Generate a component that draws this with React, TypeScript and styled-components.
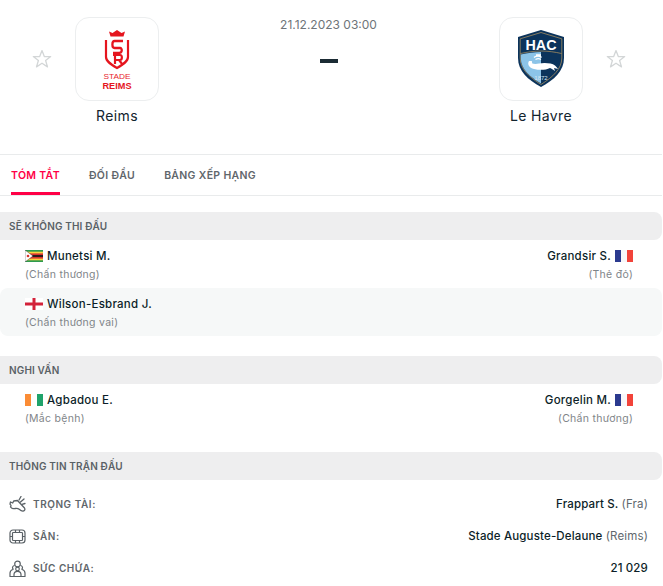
import React from "react";
import styled, { createGlobalStyle } from "styled-components";

const Global = createGlobalStyle`
  html, body { margin: 0; padding: 0; background: #fff; overflow: hidden; }
  body { font-family: Inter, "Noto Sans", sans-serif; color: #001e28; }
`;

const Page = styled.div`
  width: 662px;
  height: 586px;
  overflow: hidden;
`;

const Header = styled.header`
  height: 155px;
  box-sizing: border-box;
  border-bottom: 1px solid #e9ebec;
  display: grid;
  grid-template-columns: 240px 1fr 240px;
  padding-top: 17px;
`;

const Team = styled.div<{ $away?: boolean }>`
  display: flex;
  flex-direction: ${(p) => (p.$away ? "row-reverse" : "row")};
  align-items: flex-start;
  gap: 23px;
  ${(p) => (p.$away ? "padding-right: 36px;" : "padding-left: 32px;")}
`;

const StarBox = styled.div`
  width: 20px;
  height: 20px;
  margin-top: 32px;
  flex: none;
`;

const TeamCol = styled.div`
  width: 84px;
  display: flex;
  flex-direction: column;
  align-items: center;
`;

const LogoBox = styled.div`
  width: 84px;
  height: 84px;
  box-sizing: border-box;
  border: 1px solid #eceeef;
  border-radius: 14px;
  display: flex;
  align-items: center;
  justify-content: center;
`;

const TeamName = styled.div`
  margin-top: 6px;
  font-size: 14px;
  line-height: 18px;
  letter-spacing: 0.35px;
  white-space: nowrap;
  color: #12242e;
`;

const Center = styled.div`
  display: flex;
  flex-direction: column;
  align-items: center;
  padding-right: 5px;
`;

const Time = styled.div`
  font-size: 12px;
  line-height: 16px;
  color: #6e7479;
  letter-spacing: 0;
`;

const Dash = styled.div`
  width: 18px;
  height: 4px;
  margin-top: 26px;
  background: #1b2b34;
`;

const Tabs = styled.nav`
  height: 41px;
  box-sizing: border-box;
  border-bottom: 1px solid #e9ebec;
  display: flex;
  padding-left: 11px;
  gap: 29px;
`;

const Tab = styled.div<{ $active?: boolean }>`
  height: 40px;
  box-sizing: border-box;
  padding-top: 13px;
  font-size: 10.5px;
  line-height: 16px;
  font-weight: 600;
  letter-spacing: 0.32px;
  white-space: nowrap;
  color: ${(p) => (p.$active ? "#ff0046" : "#5f666b")};
  border-bottom: ${(p) => (p.$active ? "3px solid #ff0046" : "3px solid transparent")};
`;

const Body = styled.main`
  padding-top: 16px;
`;

const SectionBar = styled.div`
  height: 28px;
  background: #eeeeef;
  border-radius: 0 8px 8px 0;
  padding-left: 9px;
  font-size: 10px;
  font-weight: 600;
  line-height: 28px;
  letter-spacing: 0.15px;
  color: #5a6166;
`;

const PlayerRow = styled.div<{ $shaded?: boolean }>`
  height: 48px;
  box-sizing: border-box;
  display: flex;
  justify-content: space-between;
  padding: 8px 29px 0 25px;
  border-radius: 8px;
  background: ${(p) => (p.$shaded ? "#f6f8f8" : "transparent")};
`;

const Player = styled.div<{ $right?: boolean }>`
  display: flex;
  flex-direction: column;
  align-items: ${(p) => (p.$right ? "flex-end" : "flex-start")};
`;

const PlayerName = styled.div`
  display: flex;
  align-items: center;
  gap: 4px;
  font-size: 11.5px;
  line-height: 16px;
  font-weight: 500;
  letter-spacing: 0.25px;
  color: #0c1e28;
  white-space: nowrap;
`;

const Reason = styled.div`
  margin-top: 3px;
  font-size: 10.5px;
  line-height: 16px;
  letter-spacing: 0.28px;
  color: #7f8589;
  white-space: nowrap;
`;

const Spacer = styled.div`
  height: 20px;
`;

const InfoList = styled.div`
  padding-top: 8px;
`;

const InfoRow = styled.div`
  height: 32px;
  display: flex;
  align-items: center;
  justify-content: space-between;
  padding: 0 14px 0 9px;
`;

const InfoLabel = styled.div`
  display: flex;
  align-items: center;
  gap: 7px;
  font-size: 10px;
  font-weight: 600;
  letter-spacing: 0.55px;
  color: #5f666b;
`;

const InfoValue = styled.div`
  font-size: 11.5px;
  font-weight: 500;
  letter-spacing: 0.15px;
  color: #0c1e28;
  white-space: nowrap;
`;

const Muted = styled.span`
  font-weight: 400;
  color: #60686d;
`;

const ReimsSvg = styled.svg`
  margin-top: 6px;
`;

const Star = () => (
  <svg width="20" height="20" viewBox="0 0 20 20" fill="none">
    <path d="M10 1.6l2.3 6h6.4l-5.1 3.9 1.9 6.4L10 14.2l-5.5 3.7 1.9-6.4L1.3 7.6h6.4z" stroke="#d3d6d7" strokeWidth="1.3" strokeLinejoin="round" />
  </svg>
);

const ReimsLogo = () => (
  <ReimsSvg width="30" height="64" viewBox="0 0 30 64">
    <path d="M7 1.500l3.500 1.500L15 0l4.500 3 3.500-1.500-1.500 5h-13z" fill="#e5151e" />
    <path d="M4 10v17c0 4.500 5 7.500 11 11 6-3.500 11-6.500 11-11V10" fill="none" stroke="#e5151e" strokeWidth="2.200" />
    <path d="M21 11h-8.500c-2.800 0-2.800 7 0 7h5.500c2.500 0 2.500 5-1 5h-6" fill="none" stroke="#e5151e" strokeWidth="2.300" />
    <path d="M11 25h7c2.500 0 2.500 5 0 5h-4.500M13 25v9M17 30l3.500 4.500" fill="none" stroke="#e5151e" strokeWidth="2.200" />
    <text x="15" y="48.500" textAnchor="middle" textLength="27" lengthAdjust="spacingAndGlyphs" fontFamily="Liberation Sans" fontSize="8" fill="#e8242c">STADE</text>
    <text x="15" y="58.500" textAnchor="middle" textLength="29" lengthAdjust="spacingAndGlyphs" fontFamily="Liberation Sans" fontWeight="700" fontSize="8.500" fill="#e5151e">REIMS</text>
  </ReimsSvg>
);

const HacLogo = () => (
  <svg width="48" height="58" viewBox="0 0 48 58">
    <path d="M24 0l23 7v21c0 13-10 22-23 29C11 50 1 41 1 28V7z" fill="#0b335b" />
    <path d="M24 2.500L3.200 8.800V28c0 11 9 19 20.800 26.500C35.800 47 44.800 39 44.800 28V8.800z" fill="none" stroke="#b99a62" strokeWidth="0.7" />
    <path d="M3.500 23.500c7-1.500 14-2.500 20.500-2.500s14 1 20.500 2.500" fill="none" stroke="#b99a62" strokeWidth="0.7" />
    <path d="M3.800 24.500c6.700-1.500 13.700-2.500 20.200-2.500v31.500C13 47 3.800 39 3.800 28z" fill="#8cc4e8" />
    <text x="24" y="19.500" textAnchor="middle" textLength="31" lengthAdjust="spacingAndGlyphs" fontFamily="Liberation Sans" fontWeight="700" fontSize="14.500" fill="#fff">HAC</text>
    <path d="M12 31c-2 3 0 7 5 8 6 1.500 12 1 16-1 1.500.6 3 1.600 5 3l-1-3 4 1c-1.500-2.500-4-5-7.500-5.500-4-.8-8-.8-11.500 0-3 .7-5.500.5-7-.3 0-1 .5-1.700-.500-2.200z" fill="#fff" />
    <path d="M17 27.500c2-2 6-2 7.500 0M18.500 29.500c1.800-1 3.800-1 5.500 0M19 25h5" fill="none" stroke="#fff" strokeWidth="1.300" />
    <text x="24" y="50" textAnchor="middle" fontFamily="Liberation Sans" fontSize="6" fill="#d9e4ee">1872</text>
  </svg>
);

const ZwFlag = () => (
  <svg width="18" height="12" viewBox="0 0 18 12">
    <rect width="18" height="12" fill="#2d9b4e" />
    <rect y="1.700" width="18" height="8.600" fill="#f8d23f" />
    <rect y="3.400" width="18" height="5.200" fill="#d8342f" />
    <rect y="5.100" width="18" height="1.800" fill="#1a1a1a" />
    <path d="M0 0l8 6-8 6z" fill="#fff" stroke="#222" strokeWidth="0.4" />
    <circle cx="3" cy="6" r="1.300" fill="#d8342f" />
  </svg>
);

const EnFlag = () => (
  <svg width="18" height="12" viewBox="0 0 18 12">
    <rect width="18" height="12" fill="#fff" />
    <rect x="7.500" width="3" height="12" fill="#d3223a" />
    <rect y="4.500" width="18" height="3" fill="#d3223a" />
  </svg>
);

const TriFlag = ({ a, b, c }: { a: string; b: string; c: string }) => (
  <svg width="18" height="12" viewBox="0 0 18 12">
    <rect width="6" height="12" fill={a} />
    <rect x="6" width="6" height="12" fill={b} />
    <rect x="12" width="6" height="12" fill={c} />
  </svg>
);

const Fr = () => <TriFlag a="#2b3a8f" b="#f7f7f9" c="#f2433a" />;
const Ci = () => <TriFlag a="#fb8c35" b="#ffffff" c="#1fa36b" />;

const Whistle = () => (
  <svg width="17" height="17" viewBox="0 0 17 17" fill="none" stroke="#5a6166" strokeWidth="1.300" strokeLinecap="round" strokeLinejoin="round">
    <path d="M1.500 6l2.200 1 1-2 3.800-.5 7 7.500c.8 1.200.2 3-1.300 3-1.500.3-2.800-.7-4-1.700-1.200-1-2.500-1-4-.8-2 .5-3.700 0-4.700-1.500.8-1 .5-2.200-.5-2.800z" />
    <path d="M10 4l2-3.500M11.500 6l3.500-3M13 8.300l3-.8" />
  </svg>
);

const Stadium = () => (
  <svg width="17" height="15" viewBox="0 0 17 15" fill="none" stroke="#5a6166" strokeWidth="1.200" strokeLinejoin="round">
    <rect x="1" y="1" width="15" height="13" rx="3" />
    <rect x="3.500" y="3.500" width="10" height="8" rx="0.800" />
    <path d="M1 7.500h2.500M13.500 7.500H16M6.500 1v2.500M10.500 1v2.500M6.500 11.500V14M10.500 11.500V14" />
  </svg>
);

const Crowd = () => (
  <svg width="17" height="17" viewBox="0 0 17 17" fill="none" stroke="#5a6166" strokeWidth="1.200" strokeLinejoin="round">
    <circle cx="8.500" cy="4" r="2.800" />
    <circle cx="8.500" cy="9" r="1.800" />
    <path d="M5 16.500v-2c0-2 1.500-3.200 3.500-3.200s3.500 1.200 3.500 3.200v2z" />
    <path d="M5.700 5.500C3.500 5.500 3 8 4.200 9.200 2.500 9.800 1 11.200 1 13v3.500h4M11.300 5.500c2.200 0 2.700 2.500 1.500 3.700 1.700.6 3.200 2 3.200 3.800v3.500h-4" />
  </svg>
);

export default function App() {
  return (
    <Page>
      <Global />
      <Header>
        <Team>
          <StarBox><Star /></StarBox>
          <TeamCol>
            <LogoBox><ReimsLogo /></LogoBox>
            <TeamName>Reims</TeamName>
          </TeamCol>
        </Team>
        <Center>
          <Time>21.12.2023 03:00</Time>
          <Dash />
        </Center>
        <Team $away>
          <StarBox><Star /></StarBox>
          <TeamCol>
            <LogoBox><HacLogo /></LogoBox>
            <TeamName>Le Havre</TeamName>
          </TeamCol>
        </Team>
      </Header>
      <Tabs>
        <Tab $active>TÓM TẮT</Tab>
        <Tab>ĐỐI ĐẦU</Tab>
        <Tab>BẢNG XẾP HẠNG</Tab>
      </Tabs>
      <Body>
        <SectionBar>SẼ KHÔNG THI ĐẤU</SectionBar>
        <PlayerRow>
          <Player>
            <PlayerName><ZwFlag />Munetsi M.</PlayerName>
            <Reason>(Chấn thương)</Reason>
          </Player>
          <Player $right>
            <PlayerName>Grandsir S.<Fr /></PlayerName>
            <Reason>(Thẻ đỏ)</Reason>
          </Player>
        </PlayerRow>
        <PlayerRow $shaded>
          <Player>
            <PlayerName><EnFlag />Wilson-Esbrand J.</PlayerName>
            <Reason>(Chấn thương vai)</Reason>
          </Player>
        </PlayerRow>
        <Spacer />
        <SectionBar>NGHI VẤN</SectionBar>
        <PlayerRow>
          <Player>
            <PlayerName><Ci />Agbadou E.</PlayerName>
            <Reason>(Mắc bệnh)</Reason>
          </Player>
          <Player $right>
            <PlayerName>Gorgelin M.<Fr /></PlayerName>
            <Reason>(Chấn thương)</Reason>
          </Player>
        </PlayerRow>
        <Spacer />
        <SectionBar>THÔNG TIN TRẬN ĐẤU</SectionBar>
        <InfoList>
          <InfoRow>
            <InfoLabel><Whistle />TRỌNG TÀI:</InfoLabel>
            <InfoValue>Frappart S. <Muted>(Fra)</Muted></InfoValue>
          </InfoRow>
          <InfoRow>
            <InfoLabel><Stadium />SÂN:</InfoLabel>
            <InfoValue>Stade Auguste-Delaune <Muted>(Reims)</Muted></InfoValue>
          </InfoRow>
          <InfoRow>
            <InfoLabel><Crowd />SỨC CHỨA:</InfoLabel>
            <InfoValue>21 029</InfoValue>
          </InfoRow>
        </InfoList>
      </Body>
    </Page>
  );
}
